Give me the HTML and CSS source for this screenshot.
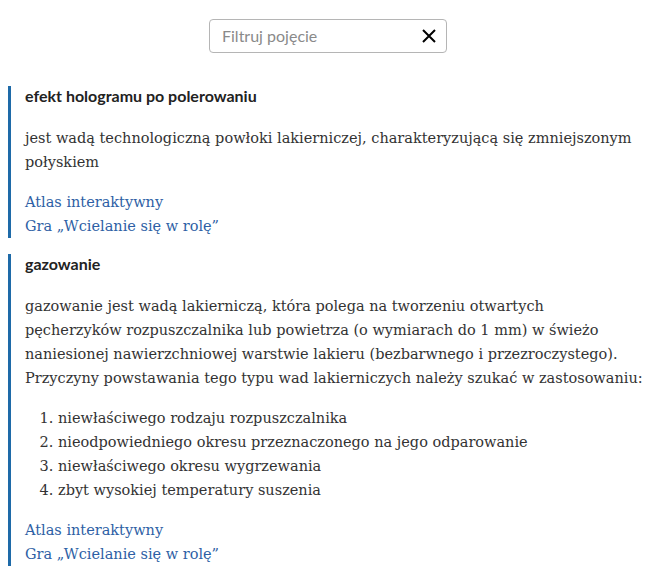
FILE: index.html
```html
<!DOCTYPE html>
<html lang="pl">
<head>
    <meta charset="UTF-8">
    <title>Słownik pojęć</title>
    <link rel="stylesheet" href="styles.css">
</head>
<body>
    <div class="search">
        <div class="search-box">
            <input type="text" placeholder="Filtruj pojęcie">
            <button class="clear" title="Wyczyść">
                <svg width="16" height="16" viewBox="0 0 16 16"><path d="M2 2L14 14M14 2L2 14" stroke="#000" stroke-width="2" fill="none"/></svg>
            </button>
        </div>
    </div>

    <!-- pojęcie 1 -->
    <div class="term">
        <h3>efekt hologramu po polerowaniu</h3>
        <p>jest wadą technologiczną powłoki lakierniczej, charakteryzującą się zmniejszonym połyskiem</p>
        <div class="links">
            <a href="#">Atlas interaktywny</a>
            <a href="#">Gra „Wcielanie się w rolę”</a>
        </div>
    </div>

    <!-- pojęcie 2 -->
    <div class="term">
        <h3>gazowanie</h3>
        <p>gazowanie jest wadą lakierniczą, która polega na tworzeniu otwartych<br> pęcherzyków rozpuszczalnika lub powietrza (o wymiarach do 1 mm) w świeżo naniesionej nawierzchniowej warstwie lakieru (bezbarwnego i przezroczystego). Przyczyny powstawania tego typu wad lakierniczych należy szukać w zastosowaniu:</p>
        <ol>
            <li>niewłaściwego rodzaju rozpuszczalnika</li>
            <li>nieodpowiedniego okresu przeznaczonego na jego odparowanie</li>
            <li>niewłaściwego okresu wygrzewania</li>
            <li>zbyt wysokiej temperatury suszenia</li>
        </ol>
        <div class="links">
            <a href="#">Atlas interaktywny</a>
            <a href="#">Gra „Wcielanie się w rolę”</a>
        </div>
    </div>
</body>
</html>
```

FILE: styles.css
```css
body {
    margin: 8px;
    background: #fff;
    color: #333;
    font-family: "DejaVu Serif", serif;
    font-size: 14.5px;
    line-height: 24px;
}

.search {
    display: flex;
    justify-content: center;
    padding: 11px 0 33px;
}

.search-box {
    display: flex;
    align-items: center;
    width: 236px;
    height: 32px;
    border: 1px solid #b5b5b5;
    border-radius: 4px;
}

.search-box input {
    flex: 1;
    min-width: 0;
    border: none;
    outline: none;
    padding: 0 0 2px 12px;
    font-family: Lato, sans-serif;
    font-size: 16px;
    color: #333;
    background: transparent;
}

.search-box input::placeholder {
    color: #8a8a8a;
}

.clear {
    border: none;
    background: none;
    padding: 0 9px 0 6px;
    display: flex;
    cursor: pointer;
}

.term {
    border-left: 3px solid #1e6aa8;
    padding-left: 14px;
    margin-bottom: 16px;
}

.term h3 {
    font-family: Lato, sans-serif;
    font-size: 16px;
    font-weight: bold;
    color: #222;
    line-height: 20px;
    margin: 0 0 20px;
}

.term p {
    margin: 0 0 16px;
}

.term ol {
    margin: 0 0 16px;
    padding-left: 33px;
}

.links a {
    display: block;
    color: #2e5fa5;
    text-decoration: none;
}
```
